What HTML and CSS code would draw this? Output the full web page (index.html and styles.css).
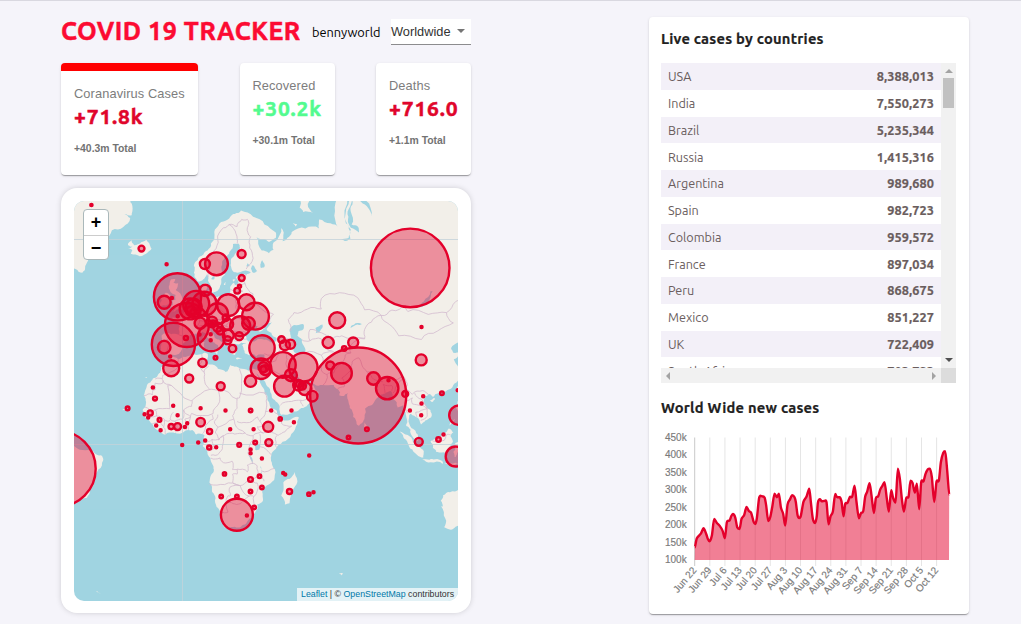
FILE: index.html
```
<!DOCTYPE html>
<html lang="en">
<head>
<meta charset="utf-8">
<title>Covid 19 Tracker</title>
<link rel="stylesheet" href="styles.css">
</head>
<body>
<div class="app">
  <main class="left">
    <header class="header">
      <h1>COVID 19 TRACKER</h1>
      <span class="user">bennyworld</span>
      <div class="select">Worldwide<i class="caret"></i></div>
    </header>
    <section class="stats">
      <article class="card stat selected">
        <p class="label">Coranavirus Cases</p>
        <h2>+71.8k</h2>
        <p class="total">+40.3m Total</p>
      </article>
      <article class="card stat recovered">
        <p class="label">Recovered</p>
        <h2>+30.2k</h2>
        <p class="total">+30.1m Total</p>
      </article>
      <article class="card stat deaths">
        <p class="label">Deaths</p>
        <h2>+716.0</h2>
        <p class="total">+1.1m Total</p>
      </article>
    </section>
    <section class="map-card">
      <div class="map">
        <svg id="map" width="384" height="400" viewBox="74 201 384 400"></svg>
        <div class="zoom"><span>+</span><span>−</span></div>
        <div class="attribution"><a>Leaflet</a> | © <a>OpenStreetMap</a> contributors</div>
      </div>
    </section>
  </main>
  <aside class="card right">
    <h3 class="t1">Live cases by countries</h3>
    <div class="scroller">
      <div class="rows">
        <div class="row"><span>USA</span><b>8,388,013</b></div>
        <div class="row"><span>India</span><b>7,550,273</b></div>
        <div class="row"><span>Brazil</span><b>5,235,344</b></div>
        <div class="row"><span>Russia</span><b>1,415,316</b></div>
        <div class="row"><span>Argentina</span><b>989,680</b></div>
        <div class="row"><span>Spain</span><b>982,723</b></div>
        <div class="row"><span>Colombia</span><b>959,572</b></div>
        <div class="row"><span>France</span><b>897,034</b></div>
        <div class="row"><span>Peru</span><b>868,675</b></div>
        <div class="row"><span>Mexico</span><b>851,227</b></div>
        <div class="row"><span>UK</span><b>722,409</b></div>
        <div class="row"><span>South Africa</span><b>703,793</b></div>
      </div>
      <div class="vbar"><i class="up"></i><i class="thumb"></i><i class="down"></i></div>
      <div class="hbar"><i class="prev"></i><i class="next"></i></div>
      <div class="corner"></div>
    </div>
    <h3 class="t2">World Wide new cases</h3>
    <svg id="chart" width="296" height="180" viewBox="661 425 296 180"></svg>
  </aside>
</div>
<script src="script.js"></script>
</body>
</html>
```
FILE: styles.css
```
* { box-sizing: border-box; margin: 0; }
body {
  width: 1021px; height: 624px; overflow: hidden;
  background: #f5f4fa; border-top: 1px solid #d9d8e0;
  font-family: Ubuntu, "Noto Sans", sans-serif; color: #000;
}
.app { display: flex; justify-content: space-between; padding: 16px 52px 0 61px; }
.left { width: 410px; }
.header { display: flex; align-items: center; height: 30px; }
h1 { width: 251px; font-size: 25px; line-height: 28px; margin-top: -2px; color: #fc0b32; white-space: nowrap; letter-spacing: .55px; -webkit-text-stroke: .5px #fc0b32; }
.user { width: 79px; font-size: 12.8px; white-space: nowrap; }
.select {
  display: flex; align-items: center; width: 80px; height: 26px;
  background: #fff; border-bottom: 1px solid #8c8c8e; margin-top: -1px;
  font: 12.8px "Liberation Sans", Arial, sans-serif; color: #333;
}
.caret { margin-left: 6px; border: 4px solid transparent; border-top-color: #757575; border-bottom: 0; }
.stats { display: flex; justify-content: space-between; margin-top: 16px; height: 112px; }
.card {
  background: #fff; border-radius: 4px;
  box-shadow: 0 2px 1px -1px rgba(0,0,0,.2), 0 1px 1px rgba(0,0,0,.14), 0 1px 3px rgba(0,0,0,.12);
}
.stat { padding: 15px 13px 0; width: 95px; white-space: nowrap; }
.stat.selected { width: 137px; border-top: 8px solid red; }
.label { font: 12.8px/16px "Liberation Sans", Arial, sans-serif; letter-spacing: .12px; color: #7d7d7d; }
.stat h2 { font-size: 21px; line-height: 28px; margin-top: 0; letter-spacing: .85px; color: #e0052b; -webkit-text-stroke: .5px currentColor; }
.recovered h2 { color: #53fb8f; }
.total { font: bold 10.4px/14px "Liberation Sans", Arial, sans-serif; margin-top: 12px; color: #737373; }
.map-card {
  margin-top: 13px; width: 410px; height: 425px; padding: 13px; background: #fff;
  border-radius: 16px; box-shadow: 0 0 6px -1px rgba(0,0,0,.22);
}
.map { position: relative; width: 384px; height: 400px; border-radius: 10px; overflow: hidden; background: #a1d4e1; }
.map svg { display: block; }
.zoom {
  position: absolute; left: 9px; top: 8px; width: 26px; height: 51px;
  border: 1px solid #aab8ba; border-radius: 4px; background: #fff; overflow: hidden;
}
.zoom span { display: block; height: 25px; font: bold 18px/24px "Liberation Sans", Arial, sans-serif; text-align: center; }
.zoom span + span { border-top: 1px solid #ccc; }
.attribution {
  position: absolute; right: 0; bottom: 0; width: 161px; height: 13px; padding-left: 4px;
  background: rgba(255,255,255,.7); color: #333; white-space: nowrap;
  font: 8.8px/13px "Liberation Sans", Arial, sans-serif;
}
.attribution a { color: #0078a8; }
.right { width: 320px; height: 597px; padding: 12px 12px 0; }
h3 { font-size: 14.7px; line-height: 20px; letter-spacing: .25px; color: #212121; white-space: nowrap; -webkit-text-stroke: .2px #212121; }
.scroller { display: grid; grid-template: 305px 15px / 280px 15px; margin-top: 14px; }
.rows { overflow: hidden; }
.row {
  display: flex; justify-content: space-between; align-items: center; height: 26.75px; padding: 0 7px;
  font-size: 12.6px; color: #6a5d5d;
}
.row b { font-size: 12.7px; letter-spacing: .1px; -webkit-text-stroke: .2px #6a5d5d; }
.row:nth-child(odd) { background: #f3f0f8; }
.vbar, .hbar { display: flex; align-items: center; justify-content: space-between; background: #f1f1f1; }
.vbar { flex-direction: column; padding: 6px 0; }
.hbar { padding: 0 5px; }
.corner { background: #dcdcdc; }
.up, .down, .prev, .next { border: 4px solid transparent; }
.up { border-bottom-color: #a3a3a3; border-top: 0; }
.down { border-top-color: #505050; border-bottom: 0; }
.prev { border-right-color: #a3a3a3; border-left: 0; }
.next { border-left-color: #a3a3a3; border-right: 0; }
.thumb { width: 11px; height: 30px; margin: 5px 0 auto; background: #c1c1c1; }
.t2 { margin-top: 15px; }
#chart { display: block; margin-top: 7px; }
.land { fill: #f2efe9; }
.water { fill: #a1d4e1; }
.border { fill: none; stroke: #d3bbcf; stroke-width: .8; stroke-linejoin: round; }
.graticule { stroke: #c3d3da; stroke-width: 1; opacity: .8; }
.case { fill: #e4002b; fill-opacity: .4; stroke: #e4002b; stroke-width: 2.4; }
.tick { font: 10px "Liberation Sans", Arial, sans-serif; fill: #7a7a7a; stroke: #7a7a7a; stroke-width: .15; text-anchor: end; }
.grid { stroke: #e5e5e5; }
.axis { stroke: #c9c9c9; }
.area { fill: #e4002b; fill-opacity: .5; }
.line { fill: none; stroke: #e4002b; stroke-width: 2.4; stroke-linejoin: round; }
```
FILE: script.js
```
// Coastlines as "lon,lat" pairs, drawn in the Web Mercator projection.
const LAND = [
  // Eurasia and Africa
  "25.7,71.1 23,70.6 21,70.2 18,69.5 15,68.5 14,67 12.5,65.8 11,64.5 8.5,63.5 6,62.4 5,61.5 5,60 5.3,59 6.5,58.1 8,58.1 10,59.1 10.7,59.6 11.3,59 11.3,58.5 12,57.5 12.7,56.2 13,55.4 14.3,55.5 15.8,56.1 16.5,57 17,58.5 18.8,59.6 17.2,60.7 17.4,62 18.5,63 20.5,63.9 21.5,64.7 22.2,65.7 24.5,65.8 25.3,65 23,63.8 21.3,62.8 21.4,61.2 22,60.4 24,60 27,60.4 30,60 28,59.5 24.5,59.4 23.4,59 24.3,58.3 24.3,57.2 23,57.1 22.5,57.7 21.2,57 21,55.8 20.5,54.9 19.5,54.4 18.5,54.8 16.5,54.5 14.2,53.9 12.5,54.4 11,54 10,54.7 9.8,55.5 10.8,56.4 10.5,57.7 8.3,57 8.1,55.5 8.8,54 7,53.4 5,53.2 4,51.8 2.5,51.1 1.6,50.6 0.2,49.6 -1.2,49.4 -1.9,49.7 -1.5,48.7 -4.7,48.5 -2.5,47.4 -1.2,46 -1.3,43.9 -2,43.4 -5,43.5 -8,43.7 -9.2,43 -8.8,41 -9.4,38.7 -8.9,37 -7,37.2 -6.2,36.4 -5.5,36.1 -4.4,36.7 -2.1,36.8 -0.7,37.7 0.1,38.8 -0.3,39.6 0.8,40.8 3.1,41.9 3.1,43.1 5,43.4 7.4,43.7 8.8,44.4 10.2,43.9 11,42.4 12.3,41.7 14,40.8 15.6,40 16,38.8 15.7,38 16.6,38.5 17.1,39.2 16.6,39.8 17,40.5 18.4,39.9 18,40.7 16,41.8 14.2,42.4 13.5,43.6 12.3,44.5 12.3,45.4 13.6,45.7 13.9,44.9 15.2,44.2 17,43 19.4,41.8 19.4,40.4 20.8,38.9 21.5,37.6 21.7,36.8 23,36.5 23.2,37.4 24,37.8 22.9,39.2 22.8,40.5 24,40.2 26,40.8 27,40.6 29,41.1 28,42 27.8,43 28.7,44.3 30,45.8 31,46.6 33,46.1 32.6,45.4 33.6,44.4 35.4,45 36.5,45.3 35,46.3 38,47 39.2,47.2 38,46 37,45 39,44 41.5,42 41.2,41.4 38.5,41 36,41.7 33,42 31,41.1 29.1,41.1 27.3,40.4 26.2,39.9 26.8,38.5 27.5,37 29,36.5 30.7,36.8 32.5,36.1 34.5,36.8 36,36.7 35.7,35 35,33 34.4,31.4 32.5,31.2 31,31.5 29,30.8 25,31.6 23,32.3 21,32.9 20,31 19,30.3 15.5,31.5 15,32.3 11,33.2 10.2,34.2 11,35.5 10.9,37 9.5,37.3 5,36.8 0,35.9 -2,35.1 -5.3,35.8 -6.8,34 -9.5,32 -9.8,30 -11,28.8 -13,27.8 -14.8,26 -16,23.8 -17,21 -16.2,19 -16.5,16 -17.5,14.7 -16.8,12.5 -15,11 -13.3,9 -12.5,7.4 -9.5,5.5 -7.5,4.4 -4,5.2 -2,4.8 1,5.9 4.3,6.3 6,4.3 8.5,4.5 9.7,3.8 9.8,1 8.9,-0.8 11,-3.5 12.3,-6 13.2,-8.8 13.8,-11 12.5,-13.5 11.8,-16.5 13,-20.5 14.5,-23 15,-26.5 16.5,-28.7 18.2,-32 18.4,-34.2 20,-34.8 23,-34 25.7,-34 28,-32.8 31,-29.8 32.7,-27.5 32.8,-25.5 35.4,-23.8 35,-20.5 37,-17.8 40.3,-15.5 40.6,-11 39.3,-8 39,-5 41,-2 44,1.2 47.8,4.5 50.5,9 51.2,11.8 48,11.2 44.5,10.5 43,11.7 41.5,14.5 39.5,15.5 38,18.3 37.2,21 35.5,24 33.8,27.2 32.5,29.8 34.2,27.8 35,29.4 34.8,28 36.5,26 38.5,23.5 39.2,21 41,18.5 42.7,16.3 43.4,12.8 45,12.9 49,14.3 52.2,15.8 55,17.2 57.8,19 59.8,22.5 58,24 56.5,26.2 55,25 52,24.2 51.5,25.8 50.8,25 50,26.7 48,29.5 49.5,30.2 51.2,28 54,26.6 56.8,27 58,25.5 61.5,25.2 66.5,25.3 67.5,23.8 69.3,22.3 69,21 71,20.8 72.7,22 72.8,19 73.5,15.8 75,12 76.5,9 77.5,8.1 79,9.5 79.9,11 80.2,13.3 80.2,15.5 82.3,16.7 85,19.5 87,21.3 89,21.8 91.5,22.8 92.3,20.8 94.2,18 94.5,16 97,17 98,14 98.6,11 98.3,8 100.2,6.4 101,3.5 103.5,1.3 103.4,4.3 102,6.3 100.5,7.3 99.3,10 100,13.3 101,12.7 102.6,12 104.8,8.7 106.7,10.4 109.2,11.8 108.9,15 106,18.8 106.8,20.7 108.3,21.6 110,20.5 111,21.5 114,22.3 117,23.5 119.5,25.8 121.7,28.5 122,30.8 120.5,33 119.2,35 122,37 119,37.3 118,39 121,40.8 130,42 130,76 80,76 80.5,72.5 83,70.2 81.5,71.5 78.5,72.3 75,72.8 69,73 67,71 68.5,68.5 65,69.2 60,69.8 60,68.4 54,68.4 48,67.8 46,66.8 44,66.2 44,68.2 43.3,68.6 40,66 40,64.6 38,64 34.8,64.5 32.5,67 35,66.6 38,66.1 41,66.8 41,67.7 36,69 31,70.2",
  "-5,50.1 -3.5,50.3 1.2,51 1.5,52.7 0,53.5 -1.7,55.5 -3,56 -1.9,57.6 -4,57.8 -3.1,58.6 -5,58.5 -6,56.8 -4.8,55.2 -3,54.7 -3.1,53.4 -4.6,53.2 -4.2,52.3 -5.2,51.8 -3,51.4",
  "-10,51.6 -6.4,52.2 -6,53.5 -5.5,54.6 -7.3,55.3 -8.5,54.4 -10,54.2 -9.2,53.2",
  "-24,65.5 -22.3,66.4 -21.3,65.5 -18,66.1 -16,66.5 -14.5,65.7 -13.6,64.9 -15.2,64.2 -18.8,63.4 -22.7,63.9 -22,64.5 -24,64.9 -22,65.3",
  "12.4,38 15.6,38.3 15.1,36.7", "8.3,40.9 9.7,40.9 9.6,39.2 8.5,39", "8.6,42.4 9.4,43 9.4,41.5", "23.5,35.5 26.3,35.2 24,34.9", "32.3,35 34.5,35.6 33.5,34.7",
  "49.3,-12 50.4,-15.5 49.5,-18 47,-25 45,-25.5 43.4,-22 44.3,-20 44.3,-16.5 47,-15",
  "80,9.7 81.8,7.5 80.5,6 79.8,7.5",
  "95.4,5.6 98,4.3 101,2.2 103.7,-1 106,-3 105.8,-5.8 103,-4.5 101,-2.3 99,0.5 97,3.2",
  "105.3,-6.7 108.5,-6.7 111,-6.5 114.5,-7.7 114.3,-8.6 109,-7.8", "115,-8.3 119,-8.3 122,-8.6 119,-9",
  "109,1.5 111.3,2.5 113,3.2 115,5 117,7 119,5.2 117.8,3.5 118.8,1 117.5,-0.8 116,-4 114,-3.5 111.5,-3.3 110,-1.5",
  "119,-3.3 119.9,0.6 125,1.5 121,0.3 121,-1 123,-1 121.5,-2.5 122,-5 120.5,-3 120,-5.5 119.5,-5.5",
  "108.7,19.2 110.5,20 111,19.5 109.7,18.3", "120.2,23 121.5,25.2 122,25 121,22", "120,16 120.8,18.5 124,18 121,13.7", "117.3,8.3 119.5,11.2 119,10",
  "125,-14 122.2,-17.8 121.5,-19 117.5,-20.6 114.5,-21.8 113.5,-24 114.2,-26.5 113.6,-26.2 115.5,-31 115,-34.2 117.8,-35.1 120,-34 125,-33",
  "-34.9,-7 -35.3,-5.2 -37,-4.8 -39,-3.2 -44,-2.5 -48,-0.5 -52,-1 -52,-28 -48.5,-27 -48,-25 -44.5,-23 -42,-22.8 -40.8,-21 -39.2,-17.8 -39,-13.5 -37,-11",
  "-52,74 -22,74 -20,73 -23,72.3 -22,71 -22.5,70.4 -25.5,70.6 -23,70 -26,68.6 -31,68.1 -34,66.3 -39,65.6 -40.5,64 -41.5,62.5 -42.8,61 -44,60 -47,60.8 -52,63",
  "51.5,71.5 53,70.9 57.5,70.7 55,72 58,73.8 53,73.8", "48.4,69.3 50.2,69.1 49.6,68.7",
  "16.2,68.8 18,69.4 16.5,68.4", "10.8,55.7 12.5,56 12,55", "18.2,57.2 19,57.9 18.7,57.2", "22,58.4 23.2,58.5 22.2,58",
  "68.7,-49.2 70.4,-49.1 69.8,-49.8", "-38,-54 -36,-54.7 -37,-54.3", "-16.6,28.4 -15.5,28 -15.8,28.3", "-26.5,14.9 -24,16 -25,15"
];
const WATER = [
  "47,44.5 49,46.4 53,46.7 53,45 51,44.5 50.5,43 52.5,41.7 53.8,39 53.8,37 51,36.7 49,37.6 49.4,40.2 47.6,42.7",
  "58.4,45.5 61.5,46.5 60.5,44.5 58.5,43.8", "73.8,45.5 77,46.5 79,46.6 76,46.9 74,46", "104,51.5 108,53 109.9,55.6 109,55.7 106,53",
  "31,60 32.8,60.3 31,61.6 30.1,61", "34.5,61 36,61.2 35,62.6 34.4,62", "31.8,0.3 34,0.2 33.8,-2.2 32,-2.5",
  "29.2,-3.5 29.6,-3.5 31.1,-8.6 30.6,-8.5", "34,-9.7 34.6,-10 35.2,-14.2 34.4,-12.5", "72.5,73 74.5,73 73,71.3 72.7,69.8 74,68.5 77.5,67.7 77.2,68.6 74.3,69 73.9,71 74.8,72.3 75,73 73,72 71.8,69.2 73.5,68 73,66.8 69.5,66.6 71,66.3 73.8,66.7 74,68.2 72.5,69",
  "12.5,58.6 13.9,58.5 14,59.2 13.2,59.2", "28,61.4 29.5,61.4 28.5,62"
];
const BORDERS = [
  "11.3,59 12,61 12.2,63.5 14,64.5 15.5,66.5 18,68.5 20.5,69 24,68.7 26,69.8 28.5,69.8 29,69 28.5,68.5 29.9,67 29.5,65 31,63 28,60.8", "20.5,69 23.5,67.5 24,65.8",
  "28,59.5 27.5,57.5 31,55 32,53 34,51.5 38,49.8 40,49.5 38.3,47.2", "24.3,57.2 27.5,57.5", "21,56.2 26.5,55.7 24,54 23.5,52 24,50.5 22.5,49 18.8,49.5 15,51 14.2,53.9", "23.5,52 30.5,51.5 32,52", "22.5,49 27,48.2 30,46", "15,51 12.3,50.2 13.5,48.6 10,47.5 7.5,47.6 8.2,49 6,50 3,51.2", "13.5,48.6 17,48 22.5,48.2", "7.5,47.6 6.2,46 7.5,44", "-1.8,43.4 3,42.5", "-8.8,41.9 -6.5,41.8 -7,37.5", "7,46 13.5,46.5 16.5,46.5 19,46 22.5,48", "19,46 22,44.5 28.5,43.8", "22.5,44 22.5,42 26,41.8 28,42", "16,45 19.2,45 19.3,43", "20,42 23,41.3 26,41.5",
  "47.5,44.5 46.5,48 49,50 55,51 61,51 61,53.8 69,55.3 77,54 80,50.8 87.3,49.2 92,50.7 98,52 99,50.3 108,49.5 116,50 120,53 122,53.5", "87.3,49.2 91,46.5 95,43 105,41.8 112,44.5 119,47 116,50", "87.3,49.2 83,47.2 80,45 80,42 74,40 74,37.3", "52.5,41.7 56,41.4 56,45 61,44 66,42 70,43 80,42.2", "56,41.4 61,42 62,40 67,37.3 71,38 74,37.3", "54,37.3 61,36.5 66,37.5", "44.8,40 44.8,37.5 46,35 45.5,33 48,30", "36,37 42.3,37.2 44.8,39.8 43.5,41.2", "42,42 48,41.5", "36,33 41,34.5 42.3,37.2", "36,32 39,32 45,29.2 48,28.5", "61,36.5 61,31 63.5,29.3 61.7,25.2", "63.5,29.3 66.5,30 69.5,33.5 71.5,36.5 74,37.3", "68.2,23.8 71,24.5 70,28 74.5,31.5 74.5,34 77.5,35.5 79,32.5 81,30.3 88,27.8 92,27.8 97,28.3 95,26 92.5,22", "81,30 84,27.5 88,26.5", "89,22 88.2,25.5 92,25 92,22.8", "97.3,28.3 98.7,26 98,24 101,21.5 105.5,23 108,21.5", "97.5,18 98,15.5 99,13.5", "98,19 101,20 101,17.5 104.8,17 107.5,15.5 102.5,14 103,12", "102,22 105,19.5 107.5,15.5 107.5,12.3 104.7,10.5", "109.7,1.7 112,1.3 115,1.8 116,4.2 117.8,4.2",
  "43,17 48,18.5 52,19 53,16.5", "52,19 55,20 55.5,22.7 52,23",
  "-8.7,27.7 -8.7,29 -2,32 -1.8,35", "-8.7,27.5 -12,27.6", "-8.7,27.3 -8.7,26 -12,26 -12,23.4 -13,23.2 -13.2,21.3 -17,21", "-8.7,27 -4.8,25 3.2,19 4.2,19 12,23.5 9.8,26.5 9.5,30.3 7.6,33.2 8.5,36.8", "9.5,30.3 11.5,32.5", "-4.8,25 -6.5,25 -5.5,15.5 -12,15 -16.5,16.2", "4.2,19 4,16.5 0.5,15 3.5,12 4,13.5 13.5,13.5 15.5,17 15.8,23 24,19.5 24,20 25,20 25,31.5", "12,23.5 15,23", "25,22 37,22", "24,19.5 24,15.7 22,12.5 23,9 27.5,5 31,3.8 35.5,5", "15.5,13 14,10 15.5,7.5 22.5,11", "15.5,7.5 14.5,5 16,2 18.5,4 23,4.5 27.5,5", "13,13 13.5,11 10,7 8.8,4.8", "2.7,6.4 3.5,12 1,11 1.5,6.2", "-5.5,11 -3,9.8 -3,5.2", "-5.5,10.5 -8,10.3 -8.3,7.5 -7.5,4.5", "-12,15 -11.5,12.4 -16.5,12.4", "-11.5,12.4 -8,11 -8,10.3", "-4,14 -5.5,11", "-3.5,10 0,11 0.5,15", "-13.3,9 -10.5,9.8 -8.5,8", "36,22 37,17.5 36.5,14.3 34,10 35,8 33,7.8 35.5,5 42,4 45,5.5 48,8 43.5,9.2 42.5,11.5 40,14.5 36.5,14.3", "24,10 28,9.5 33,12 34,10", "41.5,4 41,0 41.6,-1.7", "34,4.5 33.9,0", "34,-1 39.2,-4.7", "31,3.7 29.7,0 29,-3 29.2,-5 30.7,-8.3 28.5,-9 28.5,-12 24,-10.8 24,-13 22,-13 22,-16.5 25.3,-17.8 28.7,-15.8 30.4,-15.6 30.3,-14.8 33,-14 32.8,-9.5 30.7,-8.3", "12.5,-6 16.5,-5.9 18,-8 21.8,-7.3 22,-11 24,-11", "11.8,-17.3 18.5,-17.4 25.3,-17.8 21,-18.3 21,-22 20,-22 20,-28.5 17,-28.7", "20,-24.8 23,-25.3 26,-24.7 29.3,-22.2 31.3,-22.3 32,-25.8", "29.3,-22.2 25.3,-17.8", "31.3,-22.3 33,-19.5 32.8,-16.7 30.4,-15.6", "34.6,-11.5 40.4,-10.5", "35.8,-16 34.5,-14", "9.8,1 13,2.2 16,2", "13,2.2 14,-1.5 11.5,-3", "16,2 18,3.5 17.5,-1 16,-4 12.5,-4.8"
];
// Case markers: x, y, radius
const CASES = `410,267.7,39.3 358,395.3,48 57.5,468.5,38 177.3,296.7,23.6 186.7,324.8,22 173.2,344.2,21.6 164,302,6.5 164,347,6.3
204.7,263.8,5 216.3,263.6,11.4 241.4,253.8,4 241.5,277.8,2.7 237,290.5,2.6 239.3,286,1.3 141.3,248.4,2.7 91.2,204.8,.9 166.4,264,.8 171.7,297.8,.8 205,290.2,5.6
196,303.7,13 190,308.7,10.5 193.5,306.5,8 191,311,5 204.3,303.5,12 217.3,313.5,10.5 228,305,11 246.3,302,8 255.3,316,13.4 248.3,323.3,6.3 240,326,10 211,337.5,13.5
171,368,8 202.3,362.6,4.2 215.3,357.6,1.6 232.3,348.4,3.5 227.3,324,5.6 211.7,321.7,5.3 200,323,5.6 217.5,327,4.5 220,330.5,3.5 228,335,5.5 227.3,340,4 239,336,3.7 225.7,317.5,3 213,323,2.5 195,313,5 185.7,337.7,1.8 199.3,334.3,.8 210.5,334,.8 210.5,340,.8 177.5,316,.8 170,356.4,.8
261.8,347.7,12.7 260.8,368.5,10.3 263.3,367,5 263,369,3 265,370,5 250.3,381,5.7 220.5,386,4 189,378.3,4 152.7,387.3,.9 154.8,398.4,1.7 173,405.6,.8 200.4,408,.8 225.3,410.3,.8 250.4,410.3,1.5 127.4,408.2,1.6 150,412.7,2.3 144.4,414,.8 148,417.4,.8 159.3,419.7,1.6 177.4,415,.8 156,425.4,.8 160.4,430,.8 171,426.4,2.4 177.4,426.4,3.2 184.7,426.7,.8 187,423,.8 200.4,422,4.3 209.4,431.4,2.3 230,429,.8 253.4,429,.8 268,426.6,5 205,440.4,.8 198,442.4,.8 182,444.7,.8 209,447.3,1.8 216,447,.8 239,444.7,1.6 255,442.4,1.6 268.6,442.4,3.2 250.4,449.4,.8 250.4,453,.8 261.7,458.4,.8
282.7,364.7,12.8 303,367,14.3 284.3,386,10.4 290.7,375,6 298.3,385,5.3 304.7,388.3,6.5 302,385.7,3.5 299,384,3 312,396,5.3 281.3,339.3,3 284.7,345,5 290.3,344,4.6 328,342.3,5.6 353,342.3,5 344,348.3,2 330,365.3,4 341.3,373,10.3 373.3,378.3,6.3 387,388,11.2 388.3,380,.8 405,393.7,2.7 421,359.7,5.5 441.7,393,1.6 423,396,.8 421.3,403.3,.8 409.7,410.3,.8 421,415,.8 421.3,326.7,.8 458.7,415,9.7 457.5,390,.8 418.6,441.6,3.7 438.3,439.3,2 443.3,434.3,.8 455.5,456.3,10 348.3,437.3,1.5 366.7,429,1.6 309,455.3,.8 271,410.3,.8 291.3,410.3,.8 280,418.7,1.4 293.7,422,.8 337,320,8
224.3,473.7,1.4 250.3,479.3,2.1 259.3,476,1.5 261.7,487.3,1.5 250.3,491.3,1.5 221,496.3,1.5 236.7,496.3,1.5 254,507.3,1.5 236.7,514.6,16 246.7,515.3,.8 283,472.7,.8 285,474.3,.8 289.3,491.3,2.3 308.7,494,1.4 313.3,492,.8`;

const project = pair => {
  const [lon, lat] = pair.split(",").map(Number);
  const y = Math.log(Math.tan(Math.PI / 4 + lat * Math.PI / 360));
  return [182.5 + lon * 2.276, 444.4 - y * 130.4];
};
// Splits each segment and nudges the midpoint so coasts are irregular.
const roughen = pts => {
  let out = pts;
  for (let pass = 0; pass < 2; pass++) {
    const next = [];
    out.forEach((p, i) => {
      const q = out[(i + 1) % out.length];
      const dx = q[0] - p[0], dy = q[1] - p[1];
      const k = Math.sin(p[0] * 12.9 + p[1] * 78.2) * 0.13;
      next.push(p, [(p[0] + q[0]) / 2 - dy * k, (p[1] + q[1]) / 2 + dx * k]);
    });
    out = next;
  }
  return out;
};
const toPath = pts => "M" + pts.map(p => p[0].toFixed(1) + " " + p[1].toFixed(1)).join("L");
const shape = (list, cls) => list.map(s => `<path class="${cls}" d="${toPath(roughen(s.split(" ").map(project)))}Z"/>`).join("");
document.getElementById("map").innerHTML =
  shape(LAND, "land") + shape(WATER, "water") +
  BORDERS.map(s => `<path class="border" d="${toPath(roughen(s.split(" ").map(project)).slice(0, -3))}"/>`).join("") +
  '<path class="graticule" d="M74 239.5H458M74 444.5H458M182.5 201V601"/>' +
  CASES.split(/\s+/).map(c => {
    const [x, y, r] = c.split(",").map(Number);
    return `<circle class="case" cx="${x + 0.2}" cy="${y + 0.2}" r="${r < 4 ? r + 0.25 : r}"/>`;
  }).join("");

// New cases per day, in chart units (three per pixel)
const DAILY = "164,455 170,428 182,414 190,398 198,415 203,430 208,437 215,420 222,370 230,382 238,390 247,405 254,428 260,380 268,375 273,362 278,355 285,365 291,395 298,400 304,370 312,358 319,334 326,346 333,352 340,378 345,385 350,368 357,306 365,302 373,306 378,330 384,376 390,365 396,335 403,294 410,305 416,294 422,335 429,355 435,390 442,327 449,312 456,299 463,305 467,320 472,358 477,367 482,360 490,318 499,303 507,279 512,320 518,370 525,382 530,360 533,322 539,311 545,317 552,316 559,320 565,386 571,362 578,348 585,295 591,305 598,305 604,318 610,362 615,325 622,322 629,304 636,303 643,270 649,320 656,368 662,353 669,347 675,303 681,288 688,263 694,300 701,352 707,308 714,302 720,282 727,270 733,260 740,310 746,348 753,284 759,308 766,321 773,219 779,250 785,310 791,348 798,308 805,303 811,255 817,262 824,291 830,264 837,341 843,260 850,257 856,235 863,221 869,219 875,245 882,319 889,258 896,255 902,200 909,172 915,167 921,225 927,298"
  .split(" ").map(s => { const [x, y] = s.split(",").map(Number); return [640.2 + x / 3, 395.6 + y / 3]; });
let curve = "M" + DAILY[0];
for (let i = 1; i < DAILY.length; i++) {
  const a = DAILY[Math.max(i - 2, 0)], b = DAILY[i - 1], c = DAILY[i], d = DAILY[Math.min(i + 1, DAILY.length - 1)];
  // Flat tangents at peaks and troughs keep the curve from overshooting.
  const mb = (b[1] - a[1]) * (c[1] - b[1]) > 0 ? (c[1] - a[1]) / 7 : 0;
  const mc = (c[1] - b[1]) * (d[1] - c[1]) > 0 ? (d[1] - b[1]) / 7 : 0;
  curve += `C${b[0] + (c[0] - a[0]) / 7} ${b[1] + mb} ${c[0] - (d[0] - b[0]) / 7} ${c[1] - mc} ${c}`;
}
const WEEKS = ["Jun 22", "Jun 29", "Jul 6", "Jul 13", "Jul 20", "Jul 27", "Aug 3", "Aug 10", "Aug 17", "Aug 24", "Aug 31", "Sep 7", "Sep 14", "Sep 21", "Sep 28", "Oct 5", "Oct 12"];
let chart = "";
WEEKS.forEach((w, i) => {
  const x = 694.7 + i * 15.12;
  chart += `<path class="${i ? "grid" : "axis"}" d="M${x} 437.5V566"/><text class="tick" transform="translate(${x + 2.3} 570.5) rotate(-50)">${w}</text>`;
});
for (let i = 0; i < 8; i++) chart += `<text class="tick" x="686.7" y="${440.8 + i * 17.5}">${450 - i * 50}k</text>`;
chart += `<path class="area" d="${curve}L949 560L694.7 560Z"/><path class="line" d="${curve}"/>`;
document.getElementById("chart").innerHTML = chart;
```
